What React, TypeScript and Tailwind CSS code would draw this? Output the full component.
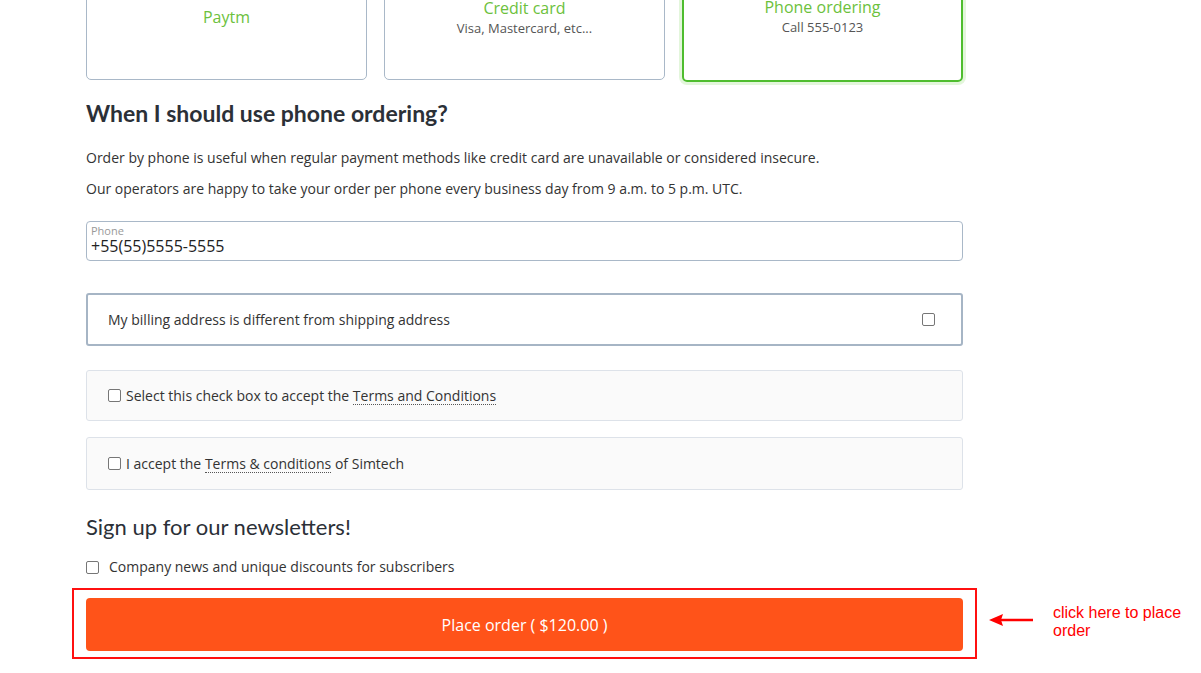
const methods = [
  { id: "paytm", title: "Paytm", note: "" },
  { id: "card", title: "Credit card", note: "Visa, Mastercard, etc..." },
  { id: "phone", title: "Phone ordering", note: "Call 555-0123" },
];

const Checkbox = ({ className = "" }: { className?: string }) => (
  <span className={`inline-block w-[13px] h-[13px] rounded-[2px] border border-[#767676] bg-white shrink-0 ${className}`} />
);

export default function App() {
  const selected = "phone";
  return (
    <div className="w-[1201px] h-[673px] overflow-hidden bg-white text-[#333] font-['Open_Sans',sans-serif]">
      <div className="ml-[86px] w-[877px] relative">
        {/* payment methods */}
        <div className="grid grid-cols-3 gap-[17px] -mt-[20px]">
          {methods.map((m) => (
            <div
              key={m.id}
              className={
                m.id === selected
                  ? "h-[102px] rounded-[5px] border-2 border-[#4fbd2f] shadow-[0_0_0_3px_#e3f6db] text-center pt-[14px]"
                  : "h-[100px] rounded-[5px] border border-[#a9b8c8] text-center pt-[16px]"
              }
            >
              <div className={`text-[16px] leading-[22px] text-[#6cc13c] ${m.id === "paytm" ? "mt-[9px]" : ""}`}>{m.title}</div>
              {m.note && <div className="text-[13px] leading-[18px] text-[#555]">{m.note}</div>}
            </div>
          ))}
        </div>

        <h2 className="mt-[16px] text-[23px] leading-[30px] font-bold text-[#2b3037] font-['Lato',sans-serif]">
          When I should use phone ordering?
        </h2>
        <p className="mt-[20px] text-[14px] leading-[20px]">
          Order by phone is useful when regular payment methods like credit card are unavailable or considered insecure.
        </p>
        <p className="mt-[11px] text-[14px] leading-[20px]">
          Our operators are happy to take your order per phone every business day from 9 a.m. to 5 p.m. UTC.
        </p>

        <div className="mt-[22px] h-[40px] rounded-[4px] border border-[#a9b8c8] px-[4px] pt-[3px]">
          <div className="text-[11px] leading-[12px] text-[#999]">Phone</div>
          <div className="text-[16px] leading-[19px] text-[#222]">+55(55)5555-5555</div>
        </div>

        <div className="mt-[32px] h-[53px] rounded-[3px] border-2 border-[#a6b5c5] flex items-center justify-between pl-[20px] pr-[26px]">
          <span className="text-[14px]">My billing address is different from shipping address</span>
          <Checkbox />
        </div>

        <div className="mt-[24px] h-[51px] rounded-[3px] border border-[#dde2e9] bg-[#fafafa] flex items-center pl-[21px] text-[14px]">
          <Checkbox className="mr-[5px]" />
          Select this check box to accept the&nbsp;
          <span className="border-b border-dotted border-[#555] leading-[17px]">Terms and Conditions</span>
        </div>

        <div className="mt-[16px] h-[53px] rounded-[3px] border border-[#dde2e9] bg-[#fafafa] flex items-center pl-[21px] text-[14px]">
          <Checkbox className="mr-[5px]" />
          I accept the&nbsp;
          <span className="border-b border-dotted border-[#555] leading-[17px]">Terms &amp; conditions</span>
          &nbsp;of Simtech
        </div>

        <h3 className="mt-[22px] text-[22px] leading-[30px] text-[#2b3037] font-['Lato',sans-serif]">
          Sign up for our newsletters!
        </h3>
        <div className="mt-[15px] flex items-center text-[14px] leading-[20px]">
          <Checkbox className="mr-[10px]" />
          Company news and unique discounts for subscribers
        </div>

        <div className="relative mt-[11px] -mx-[14px] border-2 border-[#ff1010] px-[12px] pt-[8px] pb-[6px]">
          <button className="w-full h-[53px] rounded-[4px] bg-[#ff5319] text-white text-[16px]">
            Place order ( $120.00 )
          </button>
          <div className="absolute left-[915px] top-[14px] flex items-start gap-[18px]">
            <svg width="46" height="14" viewBox="0 0 46 14" className="mt-[9px] shrink-0">
              <line x1="10" y1="7" x2="44" y2="7" stroke="#ff0000" strokeWidth="2.5" />
              <polygon points="0,7 14,1 12,7 14,13" fill="#ff0000" />
            </svg>
            <div className="w-[145px] text-[16px] leading-[18px] text-[#ff0000] font-['Liberation_Sans',Arial,sans-serif]">
              click here to place order
            </div>
          </div>
        </div>
      </div>
    </div>
  );
}
